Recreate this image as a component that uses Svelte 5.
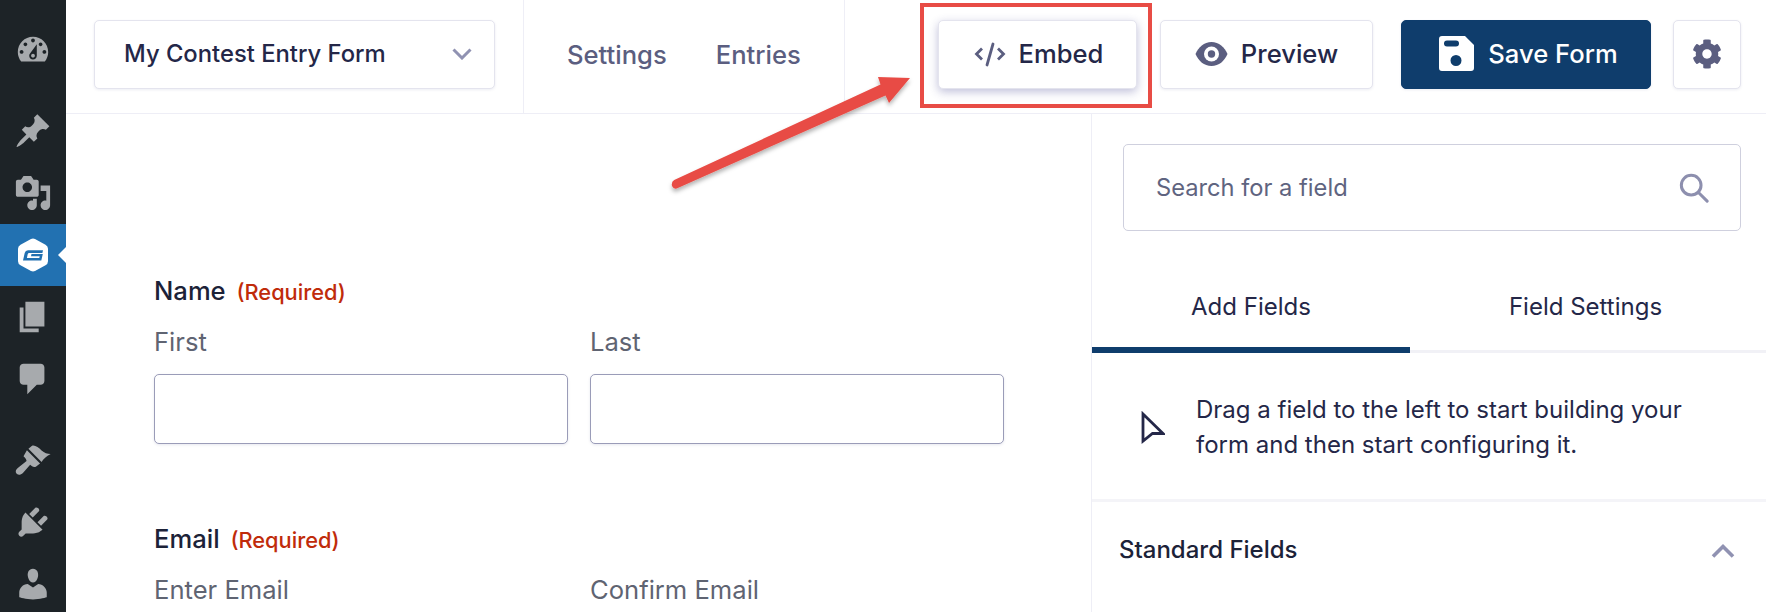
<script>
  const menu = [
    { name: 'Dashboard', d: 'M3.76 16h12.48c1.1-1.37 1.76-3.11 1.76-5 0-4.42-3.58-8-8-8s-8 3.58-8 8c0 1.89.66 3.63 1.76 5zM10 4c.55 0 1 .45 1 1s-.45 1-1 1-1-.45-1-1 .45-1 1-1zM6 6c.55 0 1 .45 1 1s-.45 1-1 1-1-.45-1-1 .45-1 1-1zm8 0c.55 0 1 .45 1 1s-.45 1-1 1-1-.45-1-1 .45-1 1-1zm-5.37 5.55L12 7v6c0 1.1-.9 2-2 2s-2-.9-2-2c0-.57.24-1.08.63-1.45zM4 10c.55 0 1 .45 1 1s-.45 1-1 1-1-.45-1-1 .45-1 1-1zm12 0c.55 0 1 .45 1 1s-.45 1-1 1-1-.45-1-1 .45-1 1-1zm-5 3c0-.55-.45-1-1-1s-1 .45-1 1 .45 1 1 1 1-.45 1-1z', gap: false },
    { name: 'Posts', d: 'M10.44 3.02l1.82-1.82 6.36 6.35-1.83 1.82c-1.05-.68-2.48-.57-3.41.36l-.75.75c-.92.93-1.04 2.35-.35 3.41l-1.83 1.82-2.41-2.41-2.8 2.79c-.42.42-3.38 2.71-3.8 2.29s1.86-3.39 2.28-3.81l2.79-2.79L4.1 9.36l1.83-1.82c1.05.69 2.48.57 3.4-.36l.75-.75c.93-.92 1.05-2.35.36-3.41z', gap: true },
    { name: 'Media', d: 'M13 11V4c0-.55-.45-1-1-1h-1.67L9 1H5L3.67 3H2c-.55 0-1 .45-1 1v7c0 .55.45 1 1 1h10c.55 0 1-.45 1-1zM7 4.5c1.38 0 2.5 1.12 2.5 2.5S8.38 9.5 7 9.5 4.5 8.38 4.5 7 5.62 4.5 7 4.5zM14 6h5v10.5c0 1.38-1.12 2.5-2.5 2.5S14 17.88 14 16.5s1.12-2.5 2.5-2.5c.17 0 .34.02.5.05V9h-3V6zm-4 8.05V13h2v3.5c0 1.38-1.12 2.5-2.5 2.5S7 17.88 7 16.5 8.12 14 9.5 14c.17 0 .34.02.5.05z', gap: false },
    { name: 'Forms', active: true, gap: false },
    { name: 'Pages', d: 'M6 15V2h10v13H6zm-1 1h8v2H3V5h2v11z', gap: false },
    { name: 'Comments', d: 'M5 2h9c1.1 0 2 .9 2 2v7c0 1.1-.9 2-2 2h-2l-5 5v-5H5c-1.1 0-2-.9-2-2V4c0-1.1.9-2 2-2z', gap: false },
    { name: 'Appearance', d: 'M7.6 4.1L9.500 2.500C11 2 13 3.500 14.500 5C16 6.300 17.500 6.800 19.300 6.800C17 8 15.500 9.500 14.500 11ZM6.800 4.900L13.700 11.800L11.500 13.500C10.300 14 9.300 13.300 8.500 12.500L4.700 16.800C3.500 18 1.800 18 1.200 17C.6 16 1 15 2 14.200L6.600 10.500C6.600 9.800 6 9 5 8Z', gap: true },
    { name: 'Plugins', d: 'M13.11 4.36L9.87 7.6 8 5.73l3.24-3.24c.35-.34 1.05-.2 1.56.32.52.51.66 1.21.31 1.55zm-8 1.77l.91-1.12 9.01 9.01-1.19.84c-.71.71-2.63 1.16-3.82 1.16H6.14L4.9 17.26c-.59.59-1.54.59-2.12 0-.59-.58-.59-1.53 0-2.12l1.24-1.24v-3.88c0-1.13.4-3.19 1.09-3.89zm7.26 3.97l3.24-3.24c.34-.35 1.04-.21 1.55.31.52.51.66 1.21.31 1.55l-3.24 3.25z', gap: false },
    { name: 'Users', d: 'M10 9.25c-2.27 0-2.73-3.44-2.73-3.44C7 4.02 7.82 2 9.97 2c2.16 0 2.98 2.02 2.71 3.81 0 0-.41 3.44-2.68 3.44zm0 2.57L12.72 10c2.39 0 4.52 2.33 4.52 4.53v2.49s-3.65 1.13-7.24 1.13c-3.65 0-7.24-1.13-7.24-1.13v-2.49c0-2.25 1.94-4.48 4.47-4.48z', gap: false }
  ];
</script>

<div class="app">
  <nav class="sidebar">
    {#each menu as item}
      <div class="item" class:active={item.active} class:gap={item.gap} title={item.name}>
        {#if item.active}
          <svg width="30" height="34" viewBox="0 0 30 34">
            <path d="M13 .9 Q15 0 17 .9 L27.500 6.800 Q30 8.200 30 10.800 V23.200 Q30 25.800 27.500 27.200 L17 33.100 Q15 34 13 33.100 L2.500 27.200 Q0 25.800 0 23.200 V10.800 Q0 8.200 2.500 6.800 Z" fill="#fff" />
            <path d="M5 22.500 L6.700 15 Q7.400 12.300 10 12.300 H25 L24.400 15 H11.200 Q10 15 9.700 16.200 L8.900 19.900 H21.300 L21.700 18.200 H13 L13.500 16 H24.800 L23.300 22.500 Z" fill="#2271b1" />
          </svg>
          <span class="pointer"></span>
        {:else}
          <svg width="38" height="38" viewBox="0 0 20 20"><path d={item.d} fill="#a7aaad" fill-rule="evenodd" /></svg>
        {/if}
      </div>
    {/each}
  </nav>

  <div class="main">
    <header class="toolbar">
      <div class="toolbar-form">
        <button class="form-select">
          <span>My Contest Entry Form</span>
          <svg width="20" height="12" viewBox="0 0 20 12"><path d="M1.500 1.500l8.500 8.500 8.500-8.500" fill="none" stroke="#9092b2" stroke-width="3" /></svg>
        </button>
      </div>
      <div class="toolbar-links">
        <a href="#settings">Settings</a>
        <a href="#entries">Entries</a>
      </div>
      <div class="toolbar-actions">
        <button class="btn embed">
          <svg width="32" height="26" viewBox="0 0 32 26" fill="none" stroke="#5b5e80" stroke-width="2.800">
            <path d="M8 7.500L2.500 13 8 18.500M24 7.500l5.500 5.500L24 18.500" />
            <path d="M19 3l-6 21" stroke-linecap="round" />
          </svg>
          Embed
        </button>
        <button class="btn preview">
          <svg width="33" height="24" viewBox="0 0 33 24">
            <path d="M16.500 0C9 0 3.500 5 .5 12c3 7 8.500 12 16 12s13-5 16-12c-3-7-8.500-12-16-12z" fill="#5b5e80" />
            <circle cx="16.500" cy="12" r="7.500" fill="#fff" />
            <circle cx="16.500" cy="12" r="3.700" fill="#5b5e80" />
          </svg>
          Preview
        </button>
        <button class="btn save">
          <svg width="35" height="35" viewBox="0 0 35 35">
            <path fill-rule="evenodd" fill="#fff" d="M3 0H26L35 9V32Q35 35 32 35H3Q0 35 0 32V3Q0 0 3 0ZM8 4.500Q5 4.500 5 7.500T8 10.500H17Q20 10.500 20 7.500T17 4.500ZM17 19A5.500 5.500 0 1 0 17 30A5.500 5.500 0 1 0 17 19Z" />
          </svg>
          Save Form
        </button>
        <button class="btn gear" aria-label="Settings">
          <svg width="30" height="30" viewBox="0 0 512 512"><path fill="#5b5e80" d="M487.4 315.7l-42.6-24.6c4.3-23.2 4.3-47 0-70.2l42.600-24.600c4.900-2.800 7.100-8.600 5.500-14-11.100-35.600-30-67.800-54.700-94.600-3.800-4.100-10-5.100-14.800-2.300L380.800 110c-17.900-15.400-38.500-27.300-60.800-35.100V25.800c0-5.600-3.900-10.500-9.400-11.700-36.700-8.200-74.300-7.800-109.200 0-5.500 1.200-9.400 6.100-9.400 11.700V75c-22.200 7.900-42.800 19.800-60.800 35.100L88.700 85.500c-4.900-2.800-11-1.900-14.800 2.300-24.700 26.700-43.600 58.900-54.700 94.600-1.700 5.400.6 11.200 5.500 14L67.300 221c-4.300 23.200-4.300 47 0 70.200l-42.600 24.600c-4.900 2.800-7.100 8.600-5.500 14 11.100 35.600 30 67.800 54.700 94.600 3.800 4.100 10 5.100 14.800 2.300l42.600-24.600c17.900 15.400 38.500 27.300 60.800 35.100v49.200c0 5.600 3.900 10.500 9.400 11.700 36.700 8.200 74.300 7.800 109.200 0 5.500-1.200 9.400-6.100 9.400-11.700v-49.200c22.200-7.900 42.800-19.800 60.800-35.100l42.600 24.600c4.900 2.800 11 1.900 14.800-2.300 24.700-26.700 43.600-58.900 54.700-94.600 1.500-5.500-.7-11.300-5.600-14.100zM256 336c-44.100 0-80-35.900-80-80s35.900-80 80-80 80 35.900 80 80-35.900 80-80 80z" /></svg>
        </button>
      </div>
    </header>

    <div class="body">
      <section class="canvas">
        <div class="field">
          <div class="legend">Name <span class="req">(Required)</span></div>
          <div class="pair">
            <label>First<input type="text" /></label>
            <label>Last<input type="text" /></label>
          </div>
        </div>
        <div class="field">
          <div class="legend">Email <span class="req">(Required)</span></div>
          <div class="pair">
            <label>Enter Email<input type="text" /></label>
            <label>Confirm Email<input type="text" /></label>
          </div>
        </div>
      </section>

      <aside class="panel">
        <div class="search">
          <input type="text" placeholder="Search for a field" />
          <svg width="30" height="30" viewBox="0 0 32 32" fill="none" stroke="#8d8fae" stroke-width="3.200">
            <circle cx="13" cy="13" r="10.500" />
            <path d="M20.500 20.500L30 30" stroke-linecap="round" />
          </svg>
        </div>
        <div class="tabs">
          <div class="tab current">Add Fields</div>
          <div class="tab">Field Settings</div>
        </div>
        <div class="hint">
          <svg width="24" height="33" viewBox="0 0 24 33">
            <path d="M2 3L22 22.500L11.500 22.500L2 30Z" fill="none" stroke="#242748" stroke-width="2.800" stroke-linejoin="miter" />
          </svg>
          <p>Drag a field to the left to start building your form and then start configuring it.</p>
        </div>
        <div class="group">
          <span>Standard Fields</span>
          <svg width="24" height="16" viewBox="0 0 24 16"><path d="M2 14.500L12 4.500l10 10" fill="none" stroke="#9092b2" stroke-width="3.600" /></svg>
        </div>
      </aside>
    </div>
  </div>

  <div class="callout"></div>
  <svg class="arrow" width="260" height="130" viewBox="660 70 260 130">
    <defs>
      <filter id="soft" x="-10%" y="-20%" width="120%" height="150%">
        <feDropShadow dx="0" dy="3" stdDeviation="2" flood-color="#000" flood-opacity="0.3" />
      </filter>
    </defs>
    <path filter="url(#soft)" fill="#e84c45" d="M910 78 L878 77 L880.500 84.500 L674.200 180 Q671 182 672 186 Q674 190 677.800 188 L885.500 95.500 L889 103 Z" />
  </svg>
</div>

<style>
  :global(body) {
    margin: 0;
    background: #fff;
    overflow: hidden;
  }

  .app {
    position: relative;
    display: flex;
    width: 1766px;
    height: 612px;
    overflow: hidden;
    font-family: Inter, "Noto Sans", sans-serif;
    color: #242748;
  }

  .sidebar {
    flex: 0 0 66px;
    padding-top: 19px;
    background: #1d2327;
  }

  .item {
    position: relative;
    display: flex;
    align-items: center;
    justify-content: center;
    height: 62px;
  }

  .item.gap {
    margin-top: 19px;
  }

  .item.active {
    background: #2271b1;
  }

  .pointer {
    position: absolute;
    right: 0;
    top: 23px;
    border: 8px solid transparent;
    border-left: 0;
    border-right-color: #fff;
  }

  .main {
    flex: 1;
    display: flex;
    flex-direction: column;
    min-width: 0;
  }

  .toolbar {
    display: flex;
    align-items: center;
    height: 113px;
    border-bottom: 1px solid #eeeef6;
    flex: none;
  }

  .toolbar-form {
    display: flex;
    align-items: center;
    width: 458px;
    height: 100%;
    padding: 0 0 4px 28px;
    box-sizing: border-box;
    border-right: 1px solid #eeeef6;
  }

  .form-select {
    display: flex;
    align-items: center;
    justify-content: space-between;
    width: 401px;
    height: 69px;
    padding: 0 22px 2px 29px;
    box-sizing: border-box;
    background: #fff;
    border: 1px solid #e4e4ee;
    border-radius: 5px;
    box-shadow: 0 1px 3px rgba(18, 25, 97, 0.08);
    font: 500 23.8px Inter, sans-serif;
    color: #242748;
  }

  .toolbar-links {
    display: flex;
    align-items: center;
    gap: 49px;
    width: 321px;
    height: 100%;
    padding: 0 0 5px 43px;
    box-sizing: border-box;
    border-right: 1px solid #eeeef6;
  }

  .toolbar-links a {
    font-size: 25.6px;
    font-weight: 500;
    color: #5b5e80;
    text-decoration: none;
  }

  .toolbar-actions {
    display: flex;
    align-items: center;
    padding: 0 0 4px 93px;
  }

  .btn {
    display: flex;
    align-items: center;
    justify-content: center;
    height: 69px;
    padding: 0 0 2px;
    background: #fff;
    border: 1px solid #e4e4ee;
    border-radius: 5px;
    box-shadow: 0 1px 3px rgba(18, 25, 97, 0.08);
    font: 500 25.6px Inter, sans-serif;
    color: #242748;
  }

  .embed {
    width: 199px;
    gap: 13px;
    padding-left: 2px;
    box-shadow: 0 3px 10px rgba(60, 60, 140, 0.32);
  }

  .preview {
    width: 213px;
    margin-left: 23px;
    gap: 13px;
  }

  .save {
    width: 250px;
    margin-left: 28px;
    gap: 14px;
    padding-left: 5px;
    background: #0f3d6c;
    border-color: #0f3d6c;
    color: #fff;
  }

  .gear {
    width: 68px;
    margin-left: 22px;
  }

  .body {
    flex: 1;
    display: flex;
    min-height: 0;
  }

  .canvas {
    flex: 1;
    padding: 159px 0 0 88px;
    box-sizing: border-box;
    min-width: 0;
    overflow: hidden;
  }

  .field {
    width: 850px;
    height: 248px;
  }

  .legend {
    font-size: 25.6px;
    font-weight: 500;
    line-height: 36px;
    color: #1c2238;
  }

  .req {
    margin-left: 4px;
    font-size: 21.8px;
    font-weight: 500;
    color: #c02b0a;
  }

  .pair {
    display: flex;
    gap: 22px;
    margin-top: 15px;
  }

  label {
    flex: 1;
    display: block;
    font-size: 25.6px;
    line-height: 34px;
    color: #5f6472;
  }

  label input {
    display: block;
    width: 100%;
    height: 70px;
    margin-top: 15px;
    box-sizing: border-box;
    background: #fff;
    border: 1px solid #9a9cb8;
    border-radius: 5px;
    box-shadow: 0 1px 3px rgba(18, 25, 97, 0.1);
  }

  .panel {
    flex: 0 0 675px;
    border-left: 1px solid #eeeef6;
    box-sizing: border-box;
  }

  .search {
    position: relative;
    display: flex;
    align-items: center;
    height: 87px;
    margin: 30px 25px 0 31px;
    padding: 0 31px 0 32px;
    border: 1px solid #cfd0de;
    border-radius: 5px;
    box-sizing: border-box;
  }

  .search input {
    flex: 1;
    min-width: 0;
    border: 0;
    outline: 0;
    padding: 0;
    font: 400 23.7px Inter, sans-serif;
    color: #242748;
  }

  .search input::placeholder {
    color: #5f6480;
    opacity: 1;
  }

  .tabs {
    display: flex;
    height: 123px;
    margin-top: -1px;
    border-bottom: 3px solid #f1f1f6;
    box-sizing: border-box;
  }

  .tab {
    flex: 1;
    display: flex;
    align-items: center;
    justify-content: center;
    padding-top: 32px;
    padding-right: 5px;
    font-size: 24px;
    font-weight: 400;
    color: #242748;
  }

  .tab.current {
    flex: 0 0 318px;
    box-sizing: border-box;
    height: 123px;
    padding: 35px 0 0;
    border-bottom: 6px solid #0f3d6c;
  }

  .hint {
    display: flex;
    align-items: center;
    gap: 31px;
    height: 149px;
    padding: 2px 0 0 49px;
    border-bottom: 3px solid #f4f4f8;
    box-sizing: border-box;
  }

  .hint p {
    margin: 0;
    width: 520px;
    font-size: 24px;
    line-height: 35px;
    color: #242748;
  }

  .group {
    display: flex;
    align-items: center;
    justify-content: space-between;
    height: 95px;
    padding: 0 31px 0 27px;
    font-size: 24px;
    font-weight: 500;
    color: #1c2238;
  }

  .callout {
    position: absolute;
    left: 920px;
    top: 3px;
    width: 232px;
    height: 105px;
    box-sizing: border-box;
    border: 4px solid #e84c45;
    pointer-events: none;
  }

  .arrow {
    position: absolute;
    left: 660px;
    top: 70px;
    pointer-events: none;
  }
</style>
